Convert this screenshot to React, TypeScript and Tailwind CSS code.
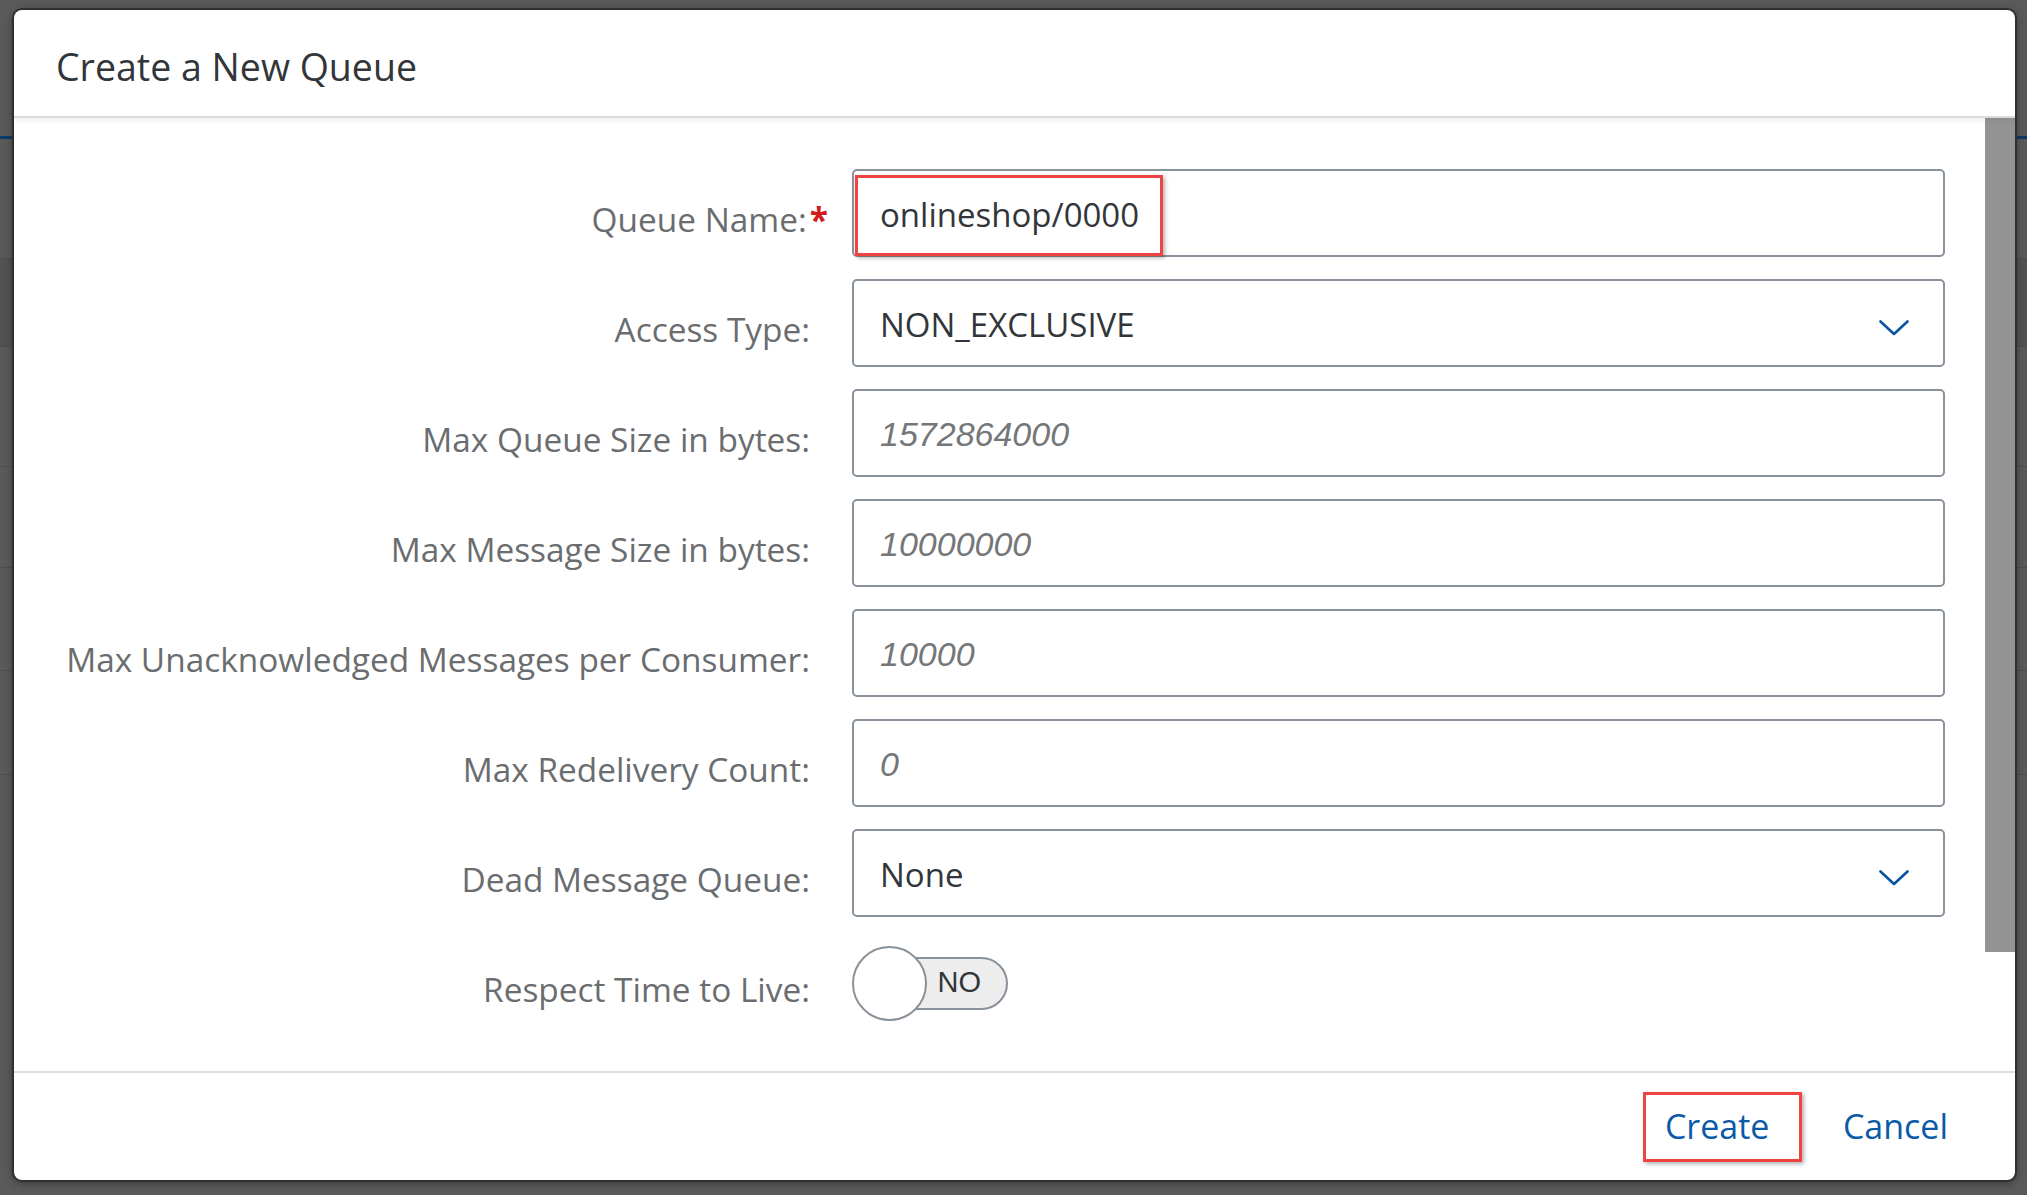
import React from 'react';

const labelFont = { fontFamily: '"Open Sans", "Noto Sans", sans-serif' };
const arialFont = { fontFamily: '"Liberation Sans", Arial, sans-serif' };

interface Field {
  label: string;
  value?: string;
  placeholder?: string;
  required?: boolean;
  select?: boolean;
}

const fields: Field[] = [
  { label: 'Queue Name:', value: 'onlineshop/0000', required: true },
  { label: 'Access Type:', value: 'NON_EXCLUSIVE', select: true },
  { label: 'Max Queue Size in bytes:', placeholder: '1572864000' },
  { label: 'Max Message Size in bytes:', placeholder: '10000000' },
  { label: 'Max Unacknowledged Messages per Consumer:', placeholder: '10000' },
  { label: 'Max Redelivery Count:', placeholder: '0' },
  { label: 'Dead Message Queue:', value: 'None', select: true },
];

const Chevron = () => (
  <svg width="30" height="16" viewBox="0 0 30 16" fill="none">
    <polyline points="1.5,1.5 15,14 28.5,1.5" stroke="#0854a0" strokeWidth="2.6" strokeLinecap="round" strokeLinejoin="round" />
  </svg>
);

const FormRow: React.FC<{ field: Field }> = ({ field }) => (
  <div className="flex items-center h-[88px]">
    <div
      className={`w-[838px] text-right text-[33.4px] text-[#6a6d70] pt-[12px] ${field.required ? 'pr-[24px]' : 'pr-[42px]'}`}
      style={labelFont}
    >
      {field.label}
      {field.required && <span className="ml-[3px] text-[#d21c1c] font-bold">*</span>}
    </div>
    <div className="relative w-[1093px] h-[88px] border-2 border-[#89919a] rounded-[5px] bg-white flex items-center px-[26px]">
      {field.value !== undefined ? (
        <span className="flex-1 text-[33px] text-[#32363a] pt-[3px]" style={labelFont}>
          {field.value}
        </span>
      ) : (
        <span className="flex-1 text-[34px] italic text-[#74777a] pt-[3px]" style={arialFont}>
          {field.placeholder}
        </span>
      )}
      {field.select && (
        <span className="mr-[8px] mt-[10px] flex">
          <Chevron />
        </span>
      )}
      {field.required && (
        <div className="absolute left-[1px] top-[4px] w-[308px] h-[81px] border-[3px] border-[#f04343] shadow-[2px_2px_4px_rgba(0,0,0,0.3)]" />
      )}
    </div>
  </div>
);

export default function App() {
  return (
    <div className="relative w-[2027px] h-[1195px] bg-[#5a5a5a] overflow-hidden">
      {/* page behind the dialog */}
      <div className="flex flex-col">
        <div className="h-[139px] border-b-[3px] border-[#0d3b68]" />
        <div className="h-[120px] border-b border-[#4d4d4d]" />
        <div className="h-[88px] bg-[#525252] border-b border-[#4d4d4d]" />
        <div className="h-[120px] border-b border-[#4d4d4d]" />
        <div className="h-[101px] border-b border-[#4d4d4d]" />
        <div className="h-[103px] border-b border-[#4d4d4d]" />
        <div className="h-[104px] border-b border-[#4d4d4d]" />
      </div>

      {/* dialog */}
      <div className="absolute left-[14px] top-[10px] w-[2001px] h-[1170px] bg-white rounded-[8px] shadow-[0_0_0_2px_#2f2f2f,0_2px_10px_rgba(0,0,0,0.5)] flex flex-col overflow-hidden">
        <div className="h-[108px] shrink-0 flex items-center pl-[42px] border-b-2 border-[#dcdcdc] shadow-[0_3px_5px_rgba(0,0,0,0.06)] z-10">
          <h2 className="text-[37.5px] text-[#32363a] pt-[8px]" style={labelFont}>
            Create a New Queue
          </h2>
        </div>

        <div className="flex-1 flex min-h-0">
          <div className="flex-1 flex flex-col gap-[22px] pt-[51px]">
            {fields.map((f) => (
              <FormRow key={f.label} field={f} />
            ))}
            <div className="flex items-center h-[88px]">
              <div className="w-[838px] text-right text-[33.4px] text-[#6a6d70] pr-[42px] pt-[12px]" style={labelFont}>
                Respect Time to Live:
              </div>
              <div className="relative flex items-center h-[75px]">
                <div className="w-[75px] h-[75px] rounded-full bg-white border-2 border-[#89919a] z-10" />
                <div className="-ml-[40px] w-[121px] h-[53px] rounded-full bg-[#ededed] border-2 border-[#89919a] flex items-center justify-end pr-[25px]">
                  <span className="text-[29px] text-[#32363a]" style={arialFont}>
                    NO
                  </span>
                </div>
              </div>
            </div>
          </div>
          <div className="w-[30px] shrink-0">
            <div className="h-[834px] bg-[#949494]" />
          </div>
        </div>

        <div className="h-[109px] shrink-0 border-t-2 border-[#dcdcdc] flex items-center justify-end gap-[21px] pr-[47px]">
          <button
            className="w-[159px] h-[70px] flex items-center justify-start pl-[19px] text-[34px] text-[#0a5aa8] border-[3px] border-[#f04343] shadow-[2px_2px_4px_rgba(0,0,0,0.3)]"
            style={labelFont}
          >
            Create
          </button>
          <button className="h-[70px] px-[20px] flex items-center text-[34px] text-[#0a5aa8]" style={labelFont}>
            Cancel
          </button>
        </div>
      </div>
    </div>
  );
}
